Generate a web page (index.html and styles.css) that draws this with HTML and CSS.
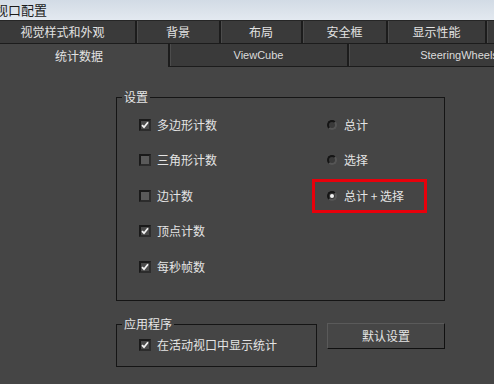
FILE: index.html
```html
<!DOCTYPE html>
<html lang="zh-CN">
<head>
  <meta charset="UTF-8">
  <title>视口配置</title>
  <link rel="stylesheet" href="styles.css">
</head>
<body>
  <div class="titlebar"><span>视口配置</span></div>

  <div class="tabrow row1">
    <div class="tab t1">视觉样式和外观</div>
    <div class="tab t2">背景</div>
    <div class="tab t3">布局</div>
    <div class="tab t4">安全框</div>
    <div class="tab t5">显示性能</div>
    <div class="tab t6">照明和阴影</div>
  </div>
  <div class="tabrow row2">
    <div class="tab active s1">统计数据</div>
    <div class="tab latin s2">ViewCube</div>
    <div class="tab latin s3">SteeringWheels</div>
  </div>

  <div class="panel">
    <fieldset class="group settings">
      <legend>设置</legend>
      <div class="columns">
        <div class="col checks">
          <div class="option"><span class="box checked"><svg viewBox="0 0 8 8"><path d="M1 4.2l2 2 4-5"/></svg></span>多边形计数</div>
          <div class="option"><span class="box"></span>三角形计数</div>
          <div class="option"><span class="box"></span>边计数</div>
          <div class="option"><span class="box checked"><svg viewBox="0 0 8 8"><path d="M1 4.2l2 2 4-5"/></svg></span>顶点计数</div>
          <div class="option"><span class="box checked"><svg viewBox="0 0 8 8"><path d="M1 4.2l2 2 4-5"/></svg></span>每秒帧数</div>
        </div>
        <div class="col radios">
          <div class="option radio"><span class="dot"></span>总计</div>
          <div class="option radio"><span class="dot"></span>选择</div>
          <div class="option radio highlight"><span class="dot on"></span>总计 + 选择</div>
        </div>
      </div>
    </fieldset>

    <div class="bottom">
      <fieldset class="group app">
        <legend>应用程序</legend>
        <div class="option app-opt"><span class="box checked"><svg viewBox="0 0 8 8"><path d="M1 4.2l2 2 4-5"/></svg></span>在活动视口中显示统计</div>
      </fieldset>
      <button class="btn">默认设置</button>
    </div>
  </div>
</body>
</html>
```

FILE: styles.css
```css
body { margin: 0; width: 494px; height: 384px; overflow: hidden; background: #454545; color: #e4e4e4; font: 12px/14px "Noto Sans CJK SC", sans-serif; }

.titlebar { height: 21px; box-sizing: border-box; display: flex; align-items: center; background: linear-gradient(#d2dbe5, #e3e9f0); border-bottom: 1px solid #262626; color: #1b1b1b; font-size: 13px; }
.titlebar span { margin-left: -5px; }

.tabrow { display: flex; height: 23px; box-sizing: border-box; overflow: hidden; white-space: nowrap; background: #3a3a3a; border-bottom: 1px solid #1c1c1c; }
.row1 .tab { height: 22px; }
.row2 { background: #454545; border-bottom: none; }
.row2 .tab { height: 23px; border-bottom: 1px solid #1c1c1c; }

.tab { flex: none; display: flex; align-items: center; justify-content: center; box-sizing: border-box; background: #3a3a3a; border-right: 2px solid #1c1c1c; box-shadow: inset 1px 0 0 #4c4c4c; color: #e2e2e2; }
.tab.latin { font: 11px "Liberation Sans", sans-serif; color: #dcdcdc; }
.tab.active { background: #454545; border-bottom: none; box-shadow: none; }

.t1 { width: 147px; margin-left: -10px; }
.t2 { width: 84px; }
.t3 { width: 82px; }
.t4 { width: 85px; }
.t5 { width: 99px; }
.t6 { width: 110px; }
.s1 { width: 180px; margin-left: -10px; }
.s2 { width: 179px; }
.s3 { width: 222px; }

.group { margin: 0; padding: 0; box-sizing: border-box; border: 1px solid #151515; }
.group legend { margin-left: 5px; padding: 0 2px; line-height: 14px; color: #e6e6e6; }

.settings { margin: 23px 0 0 116px; width: 329px; height: 211px; }
.columns { display: flex; padding: 3px 0 0 22px; }
.col { display: flex; flex-direction: column; }
.checks { width: 188px; }

.option { height: 35.5px; display: flex; align-items: center; gap: 6px; white-space: nowrap; }
.radio { gap: 7px; }

.box { width: 12px; height: 12px; box-sizing: border-box; display: flex; align-items: center; justify-content: center; background: #5a5a5a; border: 2px solid #1a1a1a; border-right-color: #2c2c2c; border-bottom-color: #2c2c2c; }
.box.checked { background: #4a4a4a; }
.box svg { width: 8px; height: 8px; fill: none; stroke: #f2f2f2; stroke-width: 1.8; }

.dot { width: 10px; height: 10px; box-sizing: border-box; border-radius: 50%; display: flex; align-items: center; justify-content: center; background: #3a3a3a; border: 2px solid #151515; border-right-color: #555; border-bottom-color: #555; }
.dot.on::before { content: ""; width: 4px; height: 4px; border-radius: 50%; background: #f0f0f0; }

.highlight { position: relative; }
.highlight::after { content: ""; position: absolute; left: -15px; top: 1px; width: 115px; height: 34px; box-sizing: border-box; border: 3px solid #e8000b; }

.bottom { display: flex; align-items: flex-start; gap: 10px; margin: 16px 0 0 116px; }
.app { width: 201px; height: 50px; }
.app-opt { height: 28px; padding-left: 22px; }

.btn { margin-top: 6px; width: 118px; height: 26px; padding: 0; background: #464646; color: #e4e4e4; font: 12px/14px "Noto Sans CJK SC", sans-serif; border: 1px solid #101010; border-top-color: #5a5a5a; border-left-color: #5a5a5a; }
```
